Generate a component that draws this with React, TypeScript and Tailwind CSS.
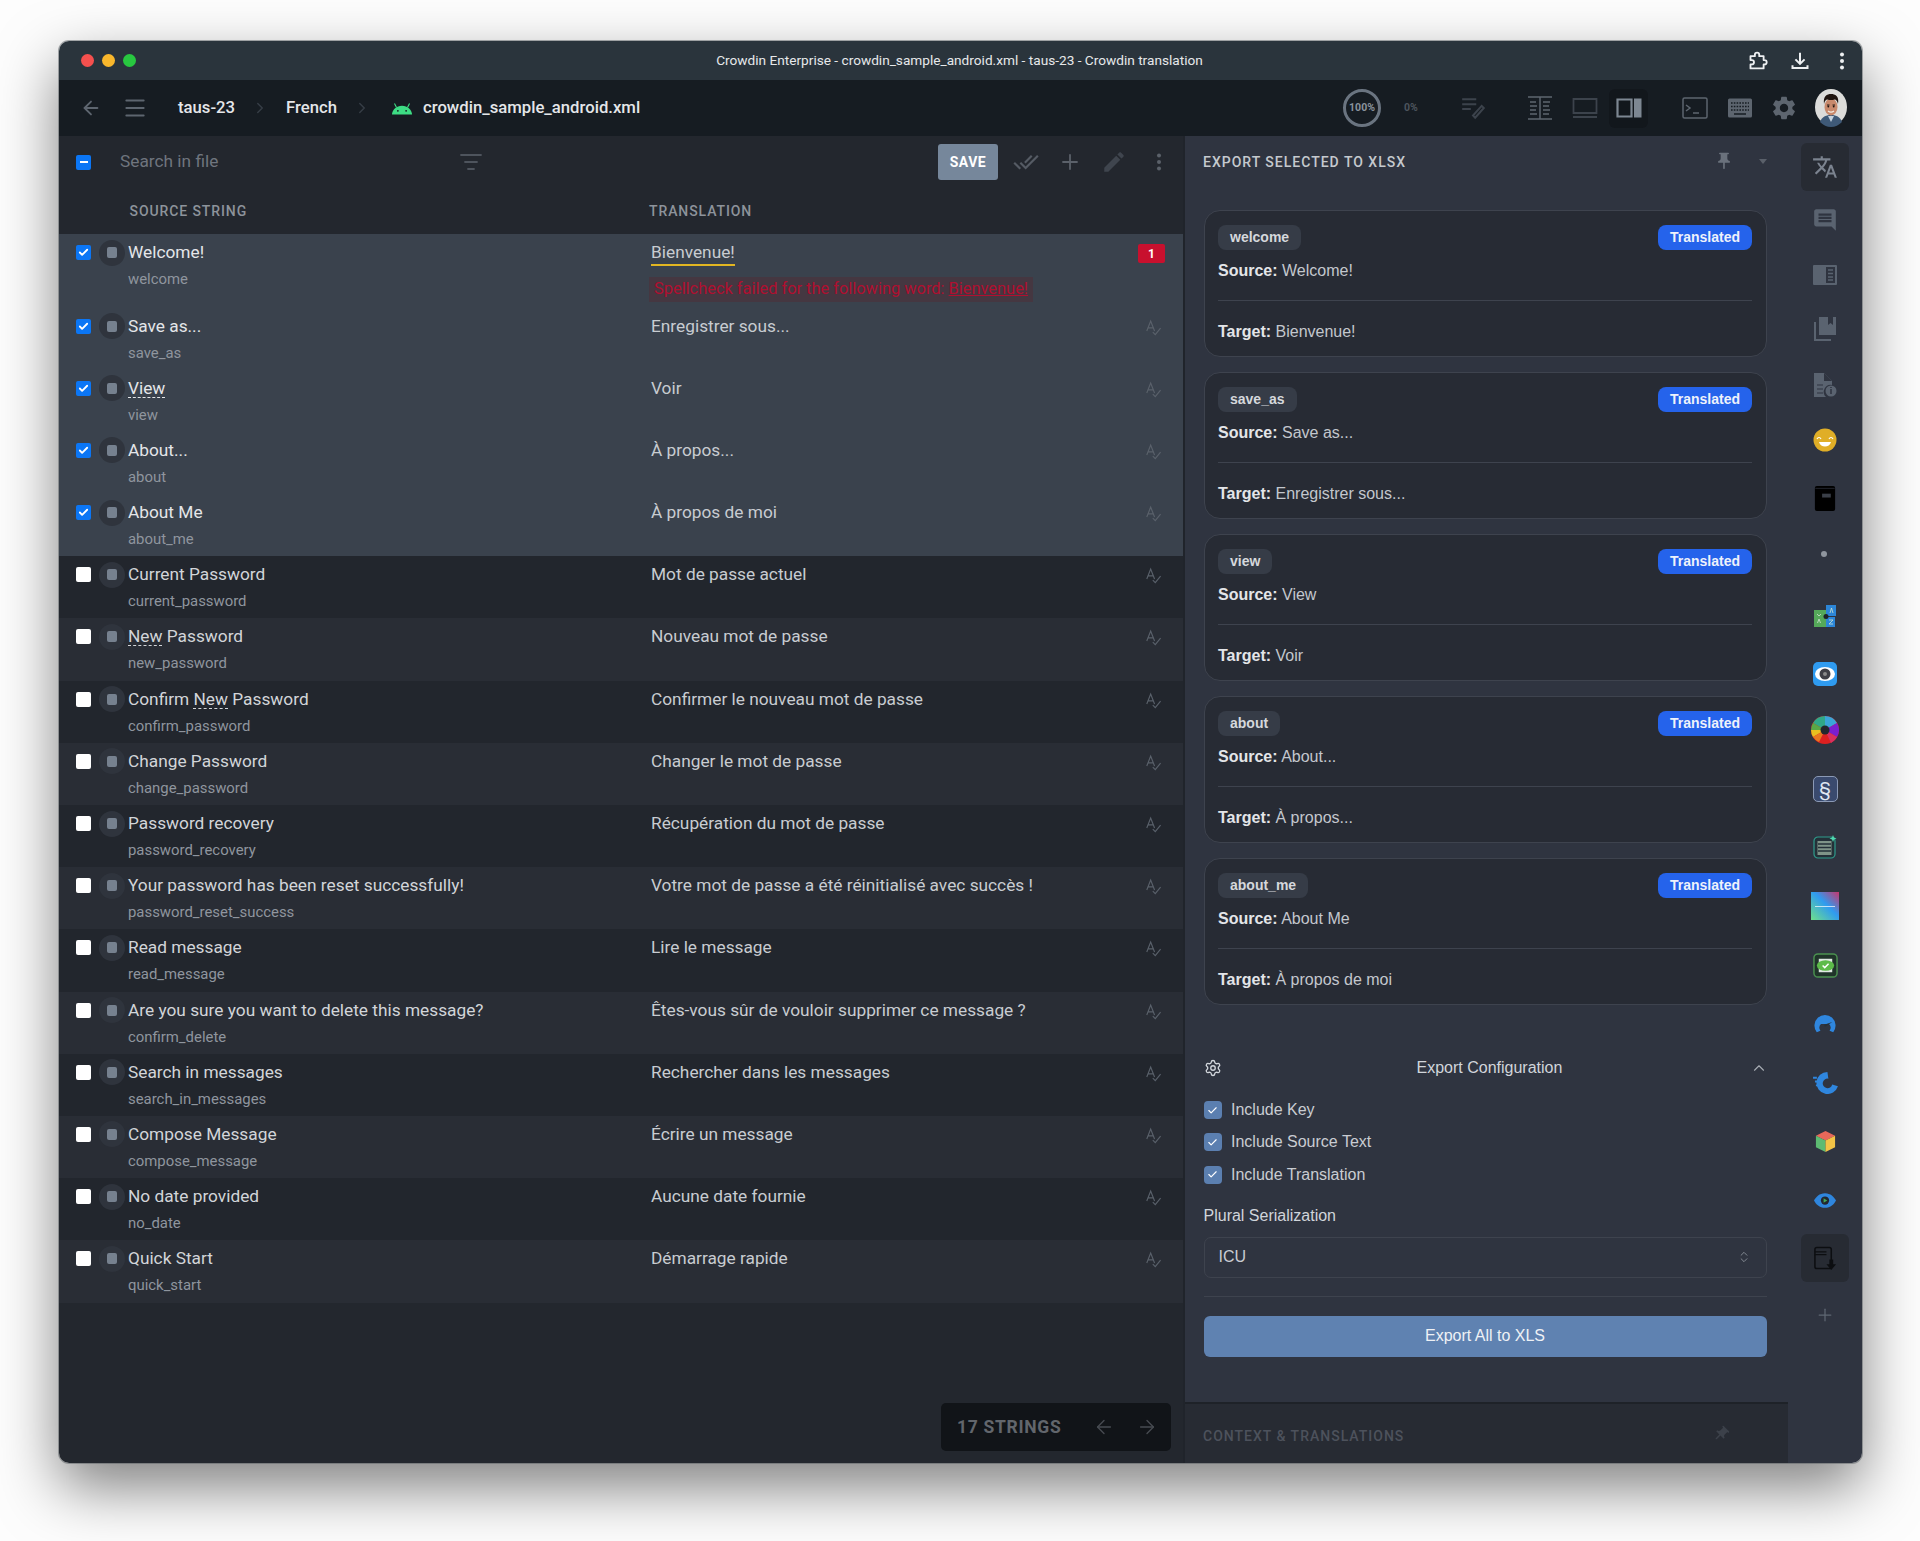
import React from 'react';
import { ArrowLeft, ArrowRight, ChevronRight, ChevronUp, ChevronsUpDown, Check, Menu, Plus, Settings, ListFilter } from 'lucide-react';

const rows = [
  { src: 'Welcome!', key: 'welcome', tr: 'Bienvenue!', sel: true },
  { src: 'Save as...', key: 'save_as', tr: 'Enregistrer sous...', sel: true },
  { src: 'View', key: 'view', tr: 'Voir', sel: true, dash: 'View' },
  { src: 'About...', key: 'about', tr: 'À propos...', sel: true },
  { src: 'About Me', key: 'about_me', tr: 'À propos de moi', sel: true },
  { src: 'Current Password', key: 'current_password', tr: 'Mot de passe actuel' },
  { src: 'New Password', key: 'new_password', tr: 'Nouveau mot de passe', dash: 'New' },
  { src: 'Confirm New Password', key: 'confirm_password', tr: 'Confirmer le nouveau mot de passe', dash: 'New' },
  { src: 'Change Password', key: 'change_password', tr: 'Changer le mot de passe' },
  { src: 'Password recovery', key: 'password_recovery', tr: 'Récupération du mot de passe' },
  { src: 'Your password has been reset successfully!', key: 'password_reset_success', tr: 'Votre mot de passe a été réinitialisé avec succès !' },
  { src: 'Read message', key: 'read_message', tr: 'Lire le message' },
  { src: 'Are you sure you want to delete this message?', key: 'confirm_delete', tr: 'Êtes-vous sûr de vouloir supprimer ce message ?' },
  { src: 'Search in messages', key: 'search_in_messages', tr: 'Rechercher dans les messages' },
  { src: 'Compose Message', key: 'compose_message', tr: 'Écrire un message' },
  { src: 'No date provided', key: 'no_date', tr: 'Aucune date fournie' },
  { src: 'Quick Start', key: 'quick_start', tr: 'Démarrage rapide' },
];

const cards = [
  { key: 'welcome', src: 'Welcome!', tr: 'Bienvenue!' },
  { key: 'save_as', src: 'Save as...', tr: 'Enregistrer sous...' },
  { key: 'view', src: 'View', tr: 'Voir' },
  { key: 'about', src: 'About...', tr: 'À propos...' },
  { key: 'about_me', src: 'About Me', tr: 'À propos de moi' },
];

const Mat = ({ d, className }: { d: string; className?: string }) => (
  <svg viewBox="0 0 24 24" fill="currentColor" className={`shrink-0 ${className}`}>
    <path d={d} />
  </svg>
);

const icons = {
  translate: 'M12.87 15.07l-2.54-2.51.03-.03c1.74-1.94 2.98-4.17 3.71-6.53H17V4h-7V2H8v2H1v1.99h11.17C11.5 7.92 10.44 9.75 9 11.35 8.07 10.32 7.3 9.19 6.69 8h-2c.73 1.63 1.73 3.17 2.98 4.56l-5.09 5.02L4 19l5-5 3.11 3.11.76-2.04zM18.5 10h-2L12 22h2l1.12-3h4.75L21 22h2l-4.5-12zm-2.62 7l1.62-4.33L19.12 17h-3.24z',
  chat: 'M21.99 4c0-1.1-.89-2-1.99-2H4c-1.1 0-2 .9-2 2v12c0 1.1.9 2 2 2h14l4 4-.01-18zM18 14H6v-2h12v2zm0-3H6V9h12v2zm0-3H6V6h12v2z',
  gear: 'M19.14 12.94c.04-.3.06-.61.06-.94 0-.32-.02-.64-.07-.94l2.03-1.58a.49.49 0 0 0 .12-.61l-1.92-3.32a.488.488 0 0 0-.59-.22l-2.39.96c-.5-.38-1.03-.7-1.62-.94l-.36-2.54a.484.484 0 0 0-.48-.41h-3.84c-.24 0-.43.17-.47.41l-.36 2.54c-.59.24-1.13.57-1.62.94l-2.39-.96c-.22-.08-.47 0-.59.22L2.74 8.87c-.12.21-.08.47.12.61l2.03 1.58c-.05.3-.09.63-.09.94s.02.64.07.94l-2.03 1.58a.49.49 0 0 0-.12.61l1.92 3.32c.12.22.37.29.59.22l2.39-.96c.5.38 1.03.7 1.62.94l.36 2.54c.05.24.24.41.48.41h3.84c.24 0 .44-.17.47-.41l.36-2.54c.59-.24 1.13-.56 1.62-.94l2.39.96c.22.08.47 0 .59-.22l1.92-3.32c.12-.22.07-.47-.12-.61l-2.01-1.58zM12 15.6c-1.98 0-3.6-1.62-3.6-3.6s1.62-3.6 3.6-3.6 3.6 1.62 3.6 3.6-1.62 3.6-3.6 3.6z',
  pin: 'M16 9V4h1c.55 0 1-.45 1-1s-.45-1-1-1H7c-.55 0-1 .45-1 1s.45 1 1 1h1v5c0 1.66-1.34 3-3 3v2h5.97v7l1 1 1-1v-7H19v-2c-1.66 0-3-1.34-3-3z',
  pencil: 'M3 17.25V21h3.75L17.81 9.94l-3.75-3.75L3 17.25zM20.71 7.04c.39-.39.39-1.02 0-1.41l-2.34-2.34c-.39-.39-1.02-.39-1.41 0l-1.83 1.83 3.75 3.75 1.83-1.83z',
  doneAll: 'M18 7l-1.41-1.41-6.34 6.34 1.41 1.41L18 7zm4.24-1.41L11.66 16.17 7.48 12l-1.41 1.41L11.66 19l12-12-1.42-1.41zM.41 13.41L6 19l1.41-1.41L1.83 12 .41 13.41z',
};

const Android = () => (
  <svg viewBox="0 0 24 14" className="w-[22px] h-[13px]">
    <path d="M1 13.5C1.5 8 6 4 12 4s10.5 4 11 9.5z" fill="#3ddc84" />
    <path d="M6 6 3.8 1.5M18 6l2.2-4.5" stroke="#3ddc84" strokeWidth="1.2" />
    <circle cx="7.5" cy="9.5" r="1" fill="#161c22" />
    <circle cx="16.5" cy="9.5" r="1" fill="#161c22" />
  </svg>
);

const Avatar = () => (
  <svg viewBox="0 0 32 38" className="w-[32px] h-[38px]">
    <ellipse cx="16" cy="18" rx="16" ry="18" fill="#dcdcda" />
    <path d="M5 33c2-6 7-7 11-7s9 1 11 7c-3 3-7 5-11 5s-8-2-11-5z" fill="#3f5a78" />
    <path d="M13 27l3 6 3-6z" fill="#c5d2de" />
    <ellipse cx="16" cy="18" rx="6.500" ry="8.500" fill="#c8896c" />
    <path d="M9 15C8 7 12 5 16 5s8.500 2 7 10c-.8-3-1.500-4.500-3.500-4.500-2 .8-5 .8-7 0C10.500 10.500 9.800 12 9 15z" fill="#1f140f" />
    <path d="M12 16h2.500M17.500 16H20" stroke="#2a1d16" strokeWidth="1" />
    <circle cx="13.300" cy="17.500" r=".9" fill="#1f140f" />
    <circle cx="18.700" cy="17.500" r=".9" fill="#1f140f" />
    <path d="M13 22c2 1.500 4 1.500 6 0" stroke="#f3e9e0" strokeWidth="1.200" fill="none" />
  </svg>
);

const Dots = ({ className }: { className: string }) => (
  <svg viewBox="0 0 24 24" className={`shrink-0 ${className}`} fill="currentColor">
    <circle cx="12" cy="5.500" r="2" />
    <circle cx="12" cy="12" r="2" />
    <circle cx="12" cy="18.500" r="2" />
  </svg>
);

const Header = () => (
  <div className="h-[39px] shrink-0 bg-[#2a343c] flex items-center relative">
    <div className="flex items-center gap-[8px] pl-[22px]">
      <span className="w-[13px] h-[13px] rounded-full bg-[#f5504e]" />
      <span className="w-[13px] h-[13px] rounded-full bg-[#f9b72c]" />
      <span className="w-[13px] h-[13px] rounded-full bg-[#28c840]" />
    </div>
    <div className="absolute left-0 right-0 text-center text-[13.650px] text-[#e6e8ea] pr-[2px]">
      Crowdin Enterprise - crowdin_sample_android.xml - taus-23 - Crowdin translation
    </div>
    <div className="ml-auto flex items-center pr-[8px] text-[#eef0f2]">
      <svg viewBox="0 0 24 24" className="w-[21px] h-[21px]" fill="none" stroke="currentColor" strokeWidth="2.100" strokeLinejoin="round">
        <path d="M4 7h5V5.500a2.500 2.500 0 0 1 5 0V7h5v4.500h1a2.500 2.500 0 0 1 0 5h-1V21H4v-4.500h1.500a2.500 2.500 0 0 0 0-5H4z" />
      </svg>
      <svg viewBox="0 0 24 24" className="w-[20px] h-[20px] ml-[22px]" fill="none" stroke="currentColor" strokeWidth="2.400">
        <path d="M12 2v13M6.500 10l5.500 5.500L17.500 10M3 17v3.500h18V17" />
      </svg>
      <Dots className="w-[24px] h-[24px] ml-[20px]" />
    </div>
  </div>
);

const Toolbar = () => (
  <div className="h-[56px] shrink-0 bg-[#161c22] flex items-center font-medium text-[#e4e6e9]">
    <ArrowLeft className="w-[22px] h-[22px] ml-[21px] text-[#5d656f]" strokeWidth={2} />
    <Menu className="w-[26px] h-[26px] ml-[20px] text-[#5d656f]" strokeWidth={1.8} />
    <span className="ml-[30px] text-[16.700px]">taus-23</span>
    <ChevronRight className="w-[18px] h-[18px] ml-[16px] text-[#353c45]" />
    <span className="ml-[17px] text-[16.700px]">French</span>
    <ChevronRight className="w-[18px] h-[18px] ml-[16px] text-[#353c45]" />
    <span className="ml-[20px]"><Android /></span>
    <span className="ml-[10px] text-[16.700px]">crowdin_sample_android.xml</span>
    <div className="ml-auto flex items-center pr-[15px] text-[#5d656f]">
      <div className="w-[38px] h-[38px] rounded-full border-[3px] border-[#6a7480] flex items-center justify-center text-[10.500px] font-bold text-[#8a929c]">100%</div>
      <span className="w-[30px] ml-[15px] text-center text-[10.500px] font-bold text-[#4d545d]">0%</span>
      <svg viewBox="0 0 24 24" className="w-[26px] h-[26px] ml-[34px] text-[#3c434c]" fill="none" stroke="currentColor" strokeWidth="1.800">
        <path d="M2 4h13M2 8.500h13M2 13h8M14 21l8-9-2-2-8 9z" />
      </svg>
      <svg viewBox="0 0 26 26" className="w-[26px] h-[26px] ml-[41px]" fill="none" stroke="currentColor" strokeWidth="1.500">
        <path d="M1 2h24M1 24h24M13 2v22M3 7h6M3 11h7M3 15h6M3 19h7M16 7h7M16 11h6M16 15h7M16 19h6" />
      </svg>
      <svg viewBox="0 0 26 24" className="w-[26px] h-[24px] ml-[19px] text-[#3c434c]" fill="none" stroke="currentColor" strokeWidth="1.800">
        <path d="M1.500 3h23v14h-23zM1 21h24" />
      </svg>
      <div className="w-[39px] h-[39px] ml-[11px] rounded-[6px] bg-[#12171c] flex items-center justify-center text-[#7d8792]">
        <svg viewBox="0 0 26 20" className="w-[26px] h-[20px]" fill="none">
          <path d="M1.500 1.500h14v17h-14z" stroke="currentColor" strokeWidth="2.200" />
          <rect x="18" y="0.500" width="7.500" height="19" fill="currentColor" />
        </svg>
      </div>
      <svg viewBox="0 0 26 22" className="w-[26px] h-[22px] ml-[34px]" fill="none" stroke="currentColor" strokeWidth="1.500">
        <rect x="1" y="1" width="24" height="20" rx="1.500" />
        <path d="M4 8l4 3-4 3M11 16h6" />
      </svg>
      <svg viewBox="0 0 26 20" className="w-[26px] h-[20px] ml-[19px]">
        <rect x="1" y="0.500" width="24" height="19" rx="1.500" fill="currentColor" />
        <path d="M4 5h18M4 8.500h18M4 12h18" stroke="#161c22" strokeWidth="1.400" strokeDasharray="1.600 1.200" />
        <path d="M7 16h12" stroke="#161c22" strokeWidth="1.500" />
      </svg>
      <Mat d={icons.gear} className="w-[28px] h-[28px] ml-[17px]" />
      <span className="ml-[17px] h-[38px]"><Avatar /></span>
    </div>
  </div>
);

const SpellIcon = () => (
  <svg viewBox="0 0 24 24" className="w-[17px] h-[17px]" fill="none" stroke="currentColor" strokeWidth="1.600">
    <path d="M2.500 17 8 3l5.500 14M4.500 12.500h7M11 18.500l3.500 3.500 7.500-9" />
  </svg>
);

const Row = ({ r, i }: { r: (typeof rows)[number]; i: number }) => {
  const parts = r.dash ? r.src.split(r.dash) : [r.src];
  const first = i === 0;
  const bg = r.sel ? 'bg-[#3a424d]' : i % 2 === 1 ? 'bg-[#22262d]' : 'bg-[#292d35]';
  return (
    <div className={`flex items-start shrink-0 ${first ? 'h-[73.500px]' : 'h-[62.200px]'} ${bg}`}>
      <span className={`ml-[17px] mt-[11px] w-[15px] h-[15px] rounded-[2px] flex items-center justify-center ${r.sel ? 'bg-[#0b76f5]' : 'bg-white'}`}>
        {r.sel && <Check className="w-[11px] h-[11px] text-white" strokeWidth={4} />}
      </span>
      <span className="ml-[7.500px] mt-[5.500px] w-[26px] h-[26px] rounded-full flex items-center justify-center bg-[#2f343d]">
        <span className="w-[10px] h-[11px] rounded-[2px] bg-[#76818f]" />
      </span>
      <div className="ml-[3.500px] w-[523px] pt-[6px]">
        <div className={`text-[17.300px] leading-[24px] ${r.sel ? 'text-[#e4e6e9]' : 'text-[#d2d5d9]'}`}>
          {r.dash ? (
            <>
              {parts[0]}
              <span className="underline decoration-dashed decoration-1 underline-offset-[3px]">{r.dash}</span>
              {parts[1]}
            </>
          ) : (
            r.src
          )}
        </div>
        <div className="mt-[5px] text-[14.900px] leading-[20px] text-[#8f959e]">{r.key}</div>
      </div>
      <div className="flex-1 pt-[6px] min-w-0">
        {first ? (
          <>
            <span className="block w-fit text-[17.300px] leading-[24px] text-[#c8ccd1] border-b-2 border-[#e2b622] h-[26px]">{r.tr}</span>
            <div className="-ml-[2px] mt-[11px] w-[384px] h-[25px] bg-[#453741] text-[#b00f30] text-[16.400px] leading-[24px] pl-[5px] whitespace-nowrap">
              Spellcheck failed for the following word: <span className="underline">Bienvenue!</span>
            </div>
          </>
        ) : (
          <div className="text-[17.300px] leading-[24px] text-[#c8ccd1]">{r.tr}</div>
        )}
      </div>
      {first ? (
        <span className="mt-[10px] mr-[18px] w-[27px] h-[19px] rounded-[2px] bg-[#c8102e] text-white text-[12px] font-bold flex items-center justify-center">1</span>
      ) : (
        <span className="mt-[11px] mr-[21px] text-[#5a616b]"><SpellIcon /></span>
      )}
    </div>
  );
};

const LeftPanel = () => (
  <div className="w-[1124px] shrink-0 bg-[#23272e] flex flex-col relative">
    <div className="h-[52px] shrink-0 flex items-center">
      <span className="ml-[17px] w-[15px] h-[15px] shrink-0 rounded-[2px] bg-[#0b76f5] flex items-center justify-center">
        <span className="w-[8px] h-[2px] bg-white" />
      </span>
      <span className="ml-[29px] w-[339px] shrink-0 whitespace-nowrap text-[17.300px] text-[#6f757e]">Search in file</span>
      <ListFilter className="w-[24px] h-[24px] shrink-0 text-[#4e545d]" strokeWidth={1.800} />
      <button className="ml-[455px] w-[60px] h-[36px] shrink-0 rounded-[3px] bg-[#76879b] text-[14px] font-bold tracking-[0.5px] text-white">SAVE</button>
      <Mat d={icons.doneAll} className="w-[26px] h-[26px] ml-[14.500px] text-[#555b64]" />
      <Plus className="w-[24px] h-[24px] shrink-0 ml-[19px] text-[#5b616a]" strokeWidth={1.800} />
      <Mat d={icons.pencil} className="w-[26px] h-[26px] ml-[19.500px] text-[#3f454e]" />
      <Dots className="w-[24px] h-[24px] ml-[20px] text-[#5b616a]" />
    </div>
    <div className="h-[46px] shrink-0 flex items-center text-[14px] font-medium tracking-[0.900px] text-[#8d939b]">
      <span className="ml-[70.500px] w-[519.500px]">SOURCE STRING</span>
      <span>TRANSLATION</span>
    </div>
    {rows.map((r, i) => <Row key={r.key} r={r} i={i} />)}
    <div className="absolute right-[12px] bottom-[12px] w-[230px] h-[48px] rounded-[5px] bg-[#111418] flex items-center text-[#62666c]">
      <span className="ml-[16px] text-[17.500px] font-bold tracking-[0.700px]">17 STRINGS</span>
      <ArrowLeft className="w-[22px] h-[22px] ml-[31.500px] text-[#474b51]" strokeWidth={1.500} />
      <ArrowRight className="w-[22px] h-[22px] ml-[21px] text-[#474b51]" strokeWidth={1.500} />
    </div>
  </div>
);

const Card = ({ c }: { c: (typeof cards)[number] }) => (
  <div className="h-[147px] rounded-[16px] border border-[#3e434e] bg-[#272b34] px-[13.500px] pt-[14px]">
    <div className="flex justify-between">
      <span className="h-[25px] px-[12px] rounded-[8px] bg-[#363c47] text-[14px] leading-[25px] font-bold text-[#d5d8dc]">{c.key}</span>
      <span className="h-[25px] w-[94px] rounded-[8px] bg-[#2563eb] text-center text-[14px] leading-[25px] font-bold text-[#eef2fb]">Translated</span>
    </div>
    <div className="mt-[9px] text-[16px] leading-[24px] text-[#c3c7cd]"><b className="text-[#e3e5e8]">Source:</b> {c.src}</div>
    <div className="mt-[17px] h-px bg-[#3e434e]" />
    <div className="mt-[19px] text-[16px] leading-[24px] text-[#c3c7cd]"><b className="text-[#e3e5e8]">Target:</b> {c.tr}</div>
  </div>
);

const Opt = ({ label }: { label: string }) => (
  <div className="h-[18px] flex items-center gap-[9.500px]">
    <span className="w-[18px] h-[18px] rounded-[4px] bg-[#5b7fb0] flex items-center justify-center">
      <Check className="w-[11px] h-[11px] text-white" strokeWidth={2.500} />
    </span>
    <span className="text-[16px] text-[#c9ccd2]">{label}</span>
  </div>
);

const RightPanel = () => (
  <div className="w-[605px] shrink-0 bg-[#2f3440] border-l-2 border-[#20242b] flex flex-col font-['Liberation_Sans',sans-serif]">
    <div className="h-[52px] shrink-0 flex items-center font-['Roboto',sans-serif]">
      <span className="ml-[18px] text-[14px] font-medium tracking-[1px] text-[#c5c9ce]">EXPORT SELECTED TO XLSX</span>
      <Mat d={icons.pin} className="w-[20px] h-[20px] ml-[308px] -mt-[3px] text-[#6a717c]" />
      <span className="ml-[25px] -mt-[1px] w-0 h-0 border-x-[4px] border-x-transparent border-t-[5px] border-t-[#5a606a]" />
    </div>
    <div className="mt-[22px] ml-[18.500px] w-[563px] flex flex-col gap-[15px]">
      {cards.map((c) => <Card key={c.key} c={c} />)}
    </div>
    <div className="ml-[18.500px] w-[563px]">
      <div className="mt-[51px] h-[24px] flex items-center relative text-[#d1d5db]">
        <Settings className="w-[18px] h-[18px] ml-[0.500px]" strokeWidth={1.800} />
        <span className="absolute left-[213px] text-[16px]">Export Configuration</span>
        <ChevronUp className="w-[18px] h-[18px] ml-auto mr-[-1px] text-[#a7acb3]" strokeWidth={1.500} />
      </div>
      <div className="mt-[21px] flex flex-col gap-[14.300px]">
        <Opt label="Include Key" />
        <Opt label="Include Source Text" />
        <Opt label="Include Translation" />
      </div>
      <div className="mt-[20px] text-[16px] leading-[24px] text-[#d1d5db]">Plural Serialization</div>
      <div className="mt-[9px] h-[41px] rounded-[7px] border border-[#3e434e] flex items-center pl-[14px] text-[16px] text-[#c9ccd2]">
        ICU
        <ChevronsUpDown className="w-[14px] h-[14px] ml-auto mr-[15px] text-[#8d939b]" strokeWidth={1.500} />
      </div>
      <div className="mt-[18px] h-px bg-[#3e434e]" />
      <button className="mt-[19px] w-full h-[41px] rounded-[6px] bg-[#5f82b1] text-[16px] text-[#eef1f5]">Export All to XLS</button>
    </div>
    <div className="mt-auto h-[61px] bg-[#272b33] border-t-2 border-[#1e2228] flex items-center font-['Roboto',sans-serif]">
      <span className="ml-[18px] mt-[6px] text-[14px] font-medium tracking-[1px] text-[#4d525c]">CONTEXT &amp; TRANSLATIONS</span>
      <Mat d={icons.pin} className="w-[18px] h-[18px] ml-[308px] rotate-45 text-[#3c414a]" />
    </div>
  </div>
);

const RailItem = ({ className, children, active }: { className: string; children?: React.ReactNode; active?: boolean }) => (
  <div className={`flex justify-center shrink-0 ${className}`}>
    <div className="relative w-[26px] h-[26px] flex items-center justify-center">
      {active && <span className="absolute -inset-[11px] rounded-[6px] bg-[#272b33]" />}
      <span className="relative flex">{children}</span>
    </div>
  </div>
);

const Rail = () => (
  <div className="flex-1 bg-[#2f3440] pt-[18px] flex flex-col text-[#5a6370]">
    <RailItem className="h-[52.500px]" active><Mat d={icons.translate} className="w-[26px] h-[26px] text-[#7b838f]" /></RailItem>
    <RailItem className="h-[55px]"><Mat d={icons.chat} className="w-[26px] h-[26px]" /></RailItem>
    <RailItem className="h-[54px]">
      <svg viewBox="0 0 26 24" className="w-[26px] h-[24px]"><path d="M2 2h22a1 1 0 0 1 1 1v18a1 1 0 0 1-1 1H2a1 1 0 0 1-1-1V3a1 1 0 0 1 1-1z" fill="currentColor" /><path d="M14 4h9v16h-9z" fill="#2f3440" /><path d="M16 7h5M16 10.500h5M16 14h5M16 17h5" stroke="currentColor" strokeWidth="1.300" /></svg>
    </RailItem>
    <RailItem className="h-[56px]">
      <svg viewBox="0 0 24 26" className="w-[24px] h-[26px]"><path d="M6 1h17v18H6z" fill="currentColor" /><path d="M15 1h5v8l-2.500-2L15 9z" fill="#2f3440" /><path d="M2 6v18h16" fill="none" stroke="currentColor" strokeWidth="2" /></svg>
    </RailItem>
    <RailItem className="h-[55.500px]">
      <svg viewBox="0 0 24 26" className="w-[24px] h-[26px]"><path d="M1 1h10l8 8v4a7 7 0 0 0-6 12H1z" fill="currentColor" /><path d="M11 1v8h8" fill="#2f3440" /><circle cx="18" cy="19" r="5.500" fill="currentColor" /><path d="M18 17v5M18 15v1" stroke="#2f3440" strokeWidth="1.500" /><path d="M4 13h6M4 17h6M4 21h6" stroke="#2f3440" strokeWidth="1.200" /></svg>
    </RailItem>
    <RailItem className="h-[58px]">
      <svg viewBox="0 0 24 24" className="w-[24px] h-[24px]"><circle cx="12" cy="12" r="11.500" fill="#e0ae27" /><path d="M6 14c1.500 6 10.500 6 12 0z" fill="#fff" /><path d="M4 11c1-2 3-2 4 0M16 11c1-2 3-2 4 0" stroke="#fff" strokeWidth="1.200" fill="none" /></svg>
    </RailItem>
    <RailItem className="h-[55.500px]">
      <svg viewBox="0 0 22 28" className="w-[22px] h-[27px]"><rect x="0.500" y="1" width="21" height="26" rx="2" fill="#000" /><path d="M1 3.500h20" stroke="#2f3440" strokeWidth="0.700" /><rect x="8" y="9" width="9" height="4" fill="#3a3f48" /></svg>
    </RailItem>
    <RailItem className="h-[62.500px]"><span className="w-[6px] h-[6px] rounded-full bg-[#8f959e] -ml-[3px]" /></RailItem>
    <RailItem className="h-[57.500px]">
      <svg viewBox="0 0 24 24" className="w-[24px] h-[24px]"><path d="M1 6h12v17H1z" fill="#55a95a" /><path d="M13 1h10v11H13z" fill="#2c86d8" /><path d="M13 13h9v10h-9z" fill="#2c86d8" /><circle cx="13" cy="12.500" r="2.500" fill="#1d2229" /><path d="M4 10l2 2 2-2M4.500 19l1.500-4 1.500 4M17 9l1.500-5 1.500 5M16 16h4l-4 4h4" stroke="#cfe3d0" strokeWidth="0.800" fill="none" /></svg>
    </RailItem>
    <RailItem className="h-[56.500px]">
      <svg viewBox="0 0 24 24" className="w-[24px] h-[24px]"><rect width="24" height="24" rx="5" fill="#2f9bf0" /><ellipse cx="12" cy="12" rx="10" ry="7" fill="#fff" /><circle cx="12" cy="12" r="5.500" fill="#3f3f46" /><circle cx="12" cy="12" r="2" fill="#8a8a8a" /></svg>
    </RailItem>
    <RailItem className="h-[58.500px]">
      <svg viewBox="0 0 28 28" className="w-[28px] h-[28px]"><circle cx="14" cy="14" r="14" fill="#dd2020" /><path d="M14 14V0a14 14 0 0 1 12 7z" fill="#3aa5d8" /><path d="M14 14l12-7a14 14 0 0 1 0 14z" fill="#7a1fd0" /><path d="M14 14l12 7a14 14 0 0 1-6 6z" fill="#d83060" /><path d="M14 14V0A14 14 0 0 0 2 7z" fill="#30a888" /><path d="M14 14L2 7a14 14 0 0 0-2 7z" fill="#5aa845" /><path d="M14 14H0a14 14 0 0 0 2 7z" fill="#e8c020" /><path d="M14 14l-12 7a14 14 0 0 0 6 5z" fill="#e87820" /><circle cx="14" cy="14" r="4.500" fill="#23272e" /></svg>
    </RailItem>
    <RailItem className="h-[58.500px]">
      <div className="w-[25px] h-[26px] rounded-[5px] border border-[#8b99b5] bg-[#3a4a6e] flex items-center justify-center text-[19px] leading-none text-[#dfe6f2]">§</div>
    </RailItem>
    <RailItem className="h-[59px]">
      <svg viewBox="0 0 24 24" className="w-[24px] h-[24px]"><rect x="1" y="2" width="21" height="21" rx="4" fill="#243038" stroke="#2f9c8c" strokeWidth="1.200" /><rect x="4.500" y="6" width="14" height="14" fill="#7f9488" /><path d="M5 9h13M5 12.500h13M5 16h13" stroke="#243038" strokeWidth="1.300" /><path d="M20 0l1 2.500L23.500 3.500 21 4.500 20 7l-1-2.500L16.500 3.500 19 2.500z" fill="#4fd8b0" /></svg>
    </RailItem>
    <RailItem className="h-[59px]">
      <div className="w-[28px] h-[28px] bg-[linear-gradient(45deg,#6fe08a,#2f9bf0_55%,#c8366e_100%)] flex items-center justify-center">
        <span className="w-[20px] h-px bg-white/70" />
      </div>
    </RailItem>
    <RailItem className="h-[57.500px]">
      <svg viewBox="0 0 26 26" className="w-[25px] h-[25px]"><rect x="1" y="1" width="24" height="24" rx="4" fill="#20342a" stroke="#4b9150" strokeWidth="1.500" /><path d="M6 6h14v14H6z" fill="#dfe8e2" /><ellipse cx="13" cy="13" rx="9" ry="5.500" fill="#5dbb4a" /><path d="M10 13l2.200 2.200 4-4" stroke="#fff" strokeWidth="1.500" fill="none" /></svg>
    </RailItem>
    <RailItem className="h-[60px]">
      <svg viewBox="0 0 24 24" className="w-[22px] h-[22px]"><path d="M3 22A11.500 11.500 0 1 1 21 22l-4-1.500a6 6 0 1 0-10 0z" fill="#2f86de" /><path d="M6 13a6 6 0 0 1 12 0z" fill="#2f86de" /><path d="M11 14l9-3-8 5z" fill="#263038" /></svg>
    </RailItem>
    <RailItem className="h-[58.500px]">
      <svg viewBox="0 0 26 24" className="w-[25px] h-[23px]"><path d="M15 1a11.500 11.500 0 1 0 11 15l-6-2a5 5 0 1 1-4-6z" fill="#2f86de" /><path d="M0 7h4M2 11h3M3 15h4" stroke="#2f86de" strokeWidth="2" /></svg>
    </RailItem>
    <RailItem className="h-[59px]">
      <svg viewBox="0 0 24 24" className="w-[23px] h-[23px]"><path d="M12 1l10 5-10 5L2 6z" fill="#e7685a" /><path d="M2 6l10 5v12L2 18z" fill="#5dbb72" /><path d="M22 6l-10 5v12l10-5z" fill="#f3c346" /></svg>
    </RailItem>
    <RailItem className="h-[58px]">
      <svg viewBox="0 0 24 16" className="w-[22px] h-[15px]"><path d="M12 0c6 0 10 4 12 8-2 4-6 8-12 8S2 12 0 8c2-4 6-8 12-8z" fill="#2f86de" /><circle cx="12" cy="8" r="4.500" fill="#23272e" /><path d="M10.500 5.500l4 2.500-4 2.500z" fill="#45a85a" /></svg>
    </RailItem>
    <RailItem className="h-[57px]" active>
      <svg viewBox="0 0 26 26" className="w-[25px] h-[25px]" fill="none"><rect x="2" y="1.500" width="17" height="22" rx="2" stroke="#0c0e11" strokeWidth="1.600" /><path d="M2 6h12M2 9h12" stroke="#0c0e11" strokeWidth="1.300" /><path d="M17 14h4v5h3l-5 6-5-6h3z" fill="#0c0e11" /></svg>
    </RailItem>
    <RailItem className="h-[26px]"><Plus className="w-[20px] h-[20px] text-[#5f6772]" strokeWidth={1.500} /></RailItem>
  </div>
);

export default function App() {
  return (
    <div className="w-full h-[1541px] bg-[#fdfdfd] pl-[59px] pt-[41px] font-['Roboto',sans-serif]">
      <div className="w-[1803px] h-[1422px] rounded-[10px] overflow-hidden flex flex-col shadow-[0_0_0_1px_rgba(90,95,100,0.5),0_24px_60px_rgba(0,0,0,0.5)]">
        <Header />
        <Toolbar />
        <div className="flex-1 min-h-0 flex">
          <LeftPanel />
          <RightPanel />
          <Rail />
        </div>
      </div>
    </div>
  );
}
